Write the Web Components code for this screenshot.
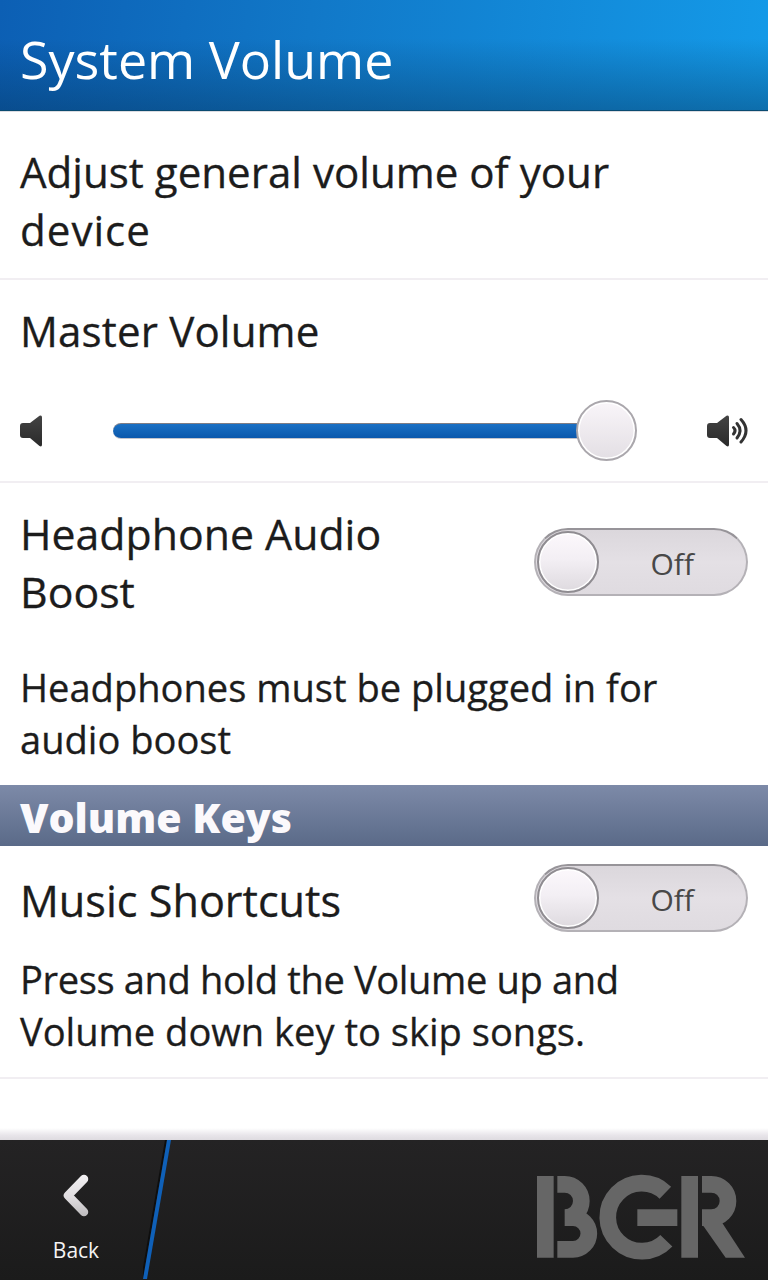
<!DOCTYPE html>
<html>
<head>
<meta charset="utf-8">
<title>System Volume</title>
<style>
  html, body { margin: 0; height: 100%; background: #fff; }
  body { font-family: "Open Sans", sans-serif; color: #1c1c1c; }
  settings-page { height: 1280px; }
</style>
</head>
<body>
<settings-page>
  <title-bar>System Volume</title-bar>
  <setting-block pad="32px 20px 19px">
    <body-text>Adjust general volume of your<br><span style="letter-spacing:1px">device</span></body-text>
  </setting-block>
  <setting-block pad="22px 20px 19px">
    <body-text style="letter-spacing:.15px">Master Volume</body-text>
    <volume-slider level="100" style="margin-top:40px"></volume-slider>
  </setting-block>
  <setting-block pad="22px 20px 20px" plain>
    <toggle-row>Headphone Audio<br>Boost</toggle-row>
    <note-text style="margin-top:40px">Headphones must be plugged in for<br>audio boost</note-text>
  </setting-block>
  <section-bar>Volume Keys</section-bar>
  <setting-block pad="18px 20px 20px">
    <toggle-row drop="4" style="--label-size:43.2px">Music Shortcuts</toggle-row>
    <note-text style="margin-top:19px"><span style="letter-spacing:-.37px">Press and hold the Volume up and</span><br>Volume down key to skip songs.</note-text>
  </setting-block>
  <bottom-bar></bottom-bar>
</settings-page>

<script>
class SettingsPage extends HTMLElement {
  connectedCallback() {
    this.attachShadow({ mode: 'open' });
    this.shadowRoot.innerHTML = `
      <style>
        :host { display: flex; flex-direction: column; background: #fff; }
      </style>
      <slot></slot>
    `;
  }
}

class TitleBar extends HTMLElement {
  connectedCallback() {
    this.attachShadow({ mode: 'open' });
    this.shadowRoot.innerHTML = `
      <style>
        :host {
          display: block;
          height: 111px;
          box-sizing: border-box;
          padding: 25px 20px 0;
          color: #fff;
          font-size: 52px;
          line-height: 68px;
          background:
            linear-gradient(180deg, rgba(4,40,90,0) 35%, rgba(4,50,90,.42) 100%),
            linear-gradient(97deg, #0c5fb4 0%, #1178c8 40%, #149ae8 100%);
          border-bottom: 1px solid #0a4a70;
          box-shadow: 0 1px 0 #dcdce2;
        }
      </style>
      <slot></slot>
    `;
  }
}

class SettingBlock extends HTMLElement {
  connectedCallback() {
    this.attachShadow({ mode: 'open' });
    const pad = this.getAttribute('pad') || '20px';
    const rule = this.hasAttribute('plain') ? 'none' : '2px solid #f1eef2';
    this.shadowRoot.innerHTML = `
      <style>
        :host { display: block; padding: ${pad}; border-bottom: ${rule}; }
      </style>
      <slot></slot>
    `;
  }
}

class BodyText extends HTMLElement {
  connectedCallback() {
    this.attachShadow({ mode: 'open' });
    this.shadowRoot.innerHTML = `
      <style>
        :host { display: block; font-size: 42.1px; line-height: 58px; -webkit-text-stroke: .3px; }
      </style>
      <slot></slot>
    `;
  }
}

class NoteText extends HTMLElement {
  connectedCallback() {
    this.attachShadow({ mode: 'open' });
    this.shadowRoot.innerHTML = `
      <style>
        :host { display: block; font-size: 38.1px; line-height: 52px; -webkit-text-stroke: .3px; }
      </style>
      <slot></slot>
    `;
  }
}

class ToggleRow extends HTMLElement {
  connectedCallback() {
    this.attachShadow({ mode: 'open' });
    const drop = this.getAttribute('drop') || 0;
    this.shadowRoot.innerHTML = `
      <style>
        :host { display: flex; justify-content: space-between; align-items: center; }
        .label { padding-top: ${drop}px; font-size: var(--label-size, 42.8px); line-height: 58px; -webkit-text-stroke: .3px; }
        toggle-switch { margin-bottom: 2px; }
      </style>
      <div class="label"><slot></slot></div>
      <toggle-switch></toggle-switch>
    `;
  }
}

class ToggleSwitch extends HTMLElement {
  connectedCallback() {
    this.attachShadow({ mode: 'open' });
    this.shadowRoot.innerHTML = `
      <style>
        :host {
          display: flex;
          align-items: center;
          justify-content: flex-end;
          position: relative;
          box-sizing: border-box;
          width: 214px;
          height: 68px;
          padding: 2px 52px 0 0;
          border-radius: 34px;
          border: 2px solid #b4b1b6;
          border-top-color: #979499;
          background: linear-gradient(#dbd7dc, #e4e0e5 50%, #dfdbe0);
          color: #484848;
          font-size: 30px;
        }
        .knob {
          position: absolute;
          left: 0;
          top: 0;
          box-sizing: border-box;
          width: 62px;
          height: 62px;
          margin: 1px;
          border-radius: 50%;
          border: 2px solid #8f8c91;
          box-shadow: inset 0 0 0 1.5px #fff;
          background: linear-gradient(#fcf8fc, #f3eff4 45%, #dedadf);
        }
      </style>
      <span class="knob"></span>
      <span>Off</span>
    `;
  }
}

class VolumeSlider extends HTMLElement {
  connectedCallback() {
    this.attachShadow({ mode: 'open' });
    this.shadowRoot.innerHTML = `
      <style>
        :host {
          display: flex;
          align-items: center;
          justify-content: space-between;
          height: 62px;
          margin-top: 41px;
        }
        .track {
          position: relative;
          box-sizing: border-box;
          width: 488px;
          height: 16px;
          margin-left: -1px;
          margin-right: 35px;
          border-radius: 8px;
          border-top: 1px solid #7f7d85;
          border-bottom: 1px solid #c4c4cc;
          background: linear-gradient(#1a70c4, #0b58ac);
        }
        .thumb {
          position: absolute;
          right: -36px;
          top: -24px;
          box-sizing: border-box;
          width: 61px;
          height: 61px;
          border-radius: 50%;
          border: 2px solid #aaa7ac;
          box-shadow: inset 0 0 0 1.5px #fff;
          background: linear-gradient(#f9f5f9, #e3dfe4);
        }
        svg { display: block; }
      </style>
      <svg width="23" height="32" viewBox="0 0 23 32">
        <defs><linearGradient id="a" x1="0" y1="0" x2="0" y2="1"><stop offset="0" stop-color="#444"/><stop offset="1" stop-color="#2a2a2a"/></linearGradient></defs>
        <path fill="url(#a)" d="M3 8h7L19.5 .8Q22 -.4 22 2.500V29.500Q22 32.400 19.500 31L10 23H3Q0 23 0 20V11Q0 8 3 8Z"/>
      </svg>
      <div class="track"><span class="thumb"></span></div>
      <svg width="42" height="32" viewBox="-1 0 42 32">
        <defs><linearGradient id="b" x1="0" y1="0" x2="0" y2="1"><stop offset="0" stop-color="#444"/><stop offset="1" stop-color="#2a2a2a"/></linearGradient></defs>
        <path fill="url(#b)" d="M3 8h7L19.500 .8Q22 -.4 22 2.500V29.500Q22 32.400 19.500 31L10 23H3Q0 23 0 20V11Q0 8 3 8Z"/>
        <g fill="none" stroke="#333" stroke-width="3" stroke-linecap="round">
          <path d="M26.500 12.500Q29.500 15.500 26.500 19"/>
          <path d="M30 8.500Q36 15.500 30 23"/>
          <path d="M34 4.500Q44 15.500 34 27"/>
        </g>
      </svg>
    `;
  }
}

class SectionBar extends HTMLElement {
  connectedCallback() {
    this.attachShadow({ mode: 'open' });
    this.shadowRoot.innerHTML = `
      <style>
        :host {
          display: block;
          height: 61px;
          box-sizing: border-box;
          padding-left: 20px;
          color: #fbf9fc;
          font-size: 41px;
          font-weight: 800;
          line-height: 65px;
          background: linear-gradient(#7d8aa8, #5a6a88);
        }
      </style>
      <slot></slot>
    `;
  }
}

class BottomBar extends HTMLElement {
  connectedCallback() {
    this.attachShadow({ mode: 'open' });
    this.shadowRoot.innerHTML = `
      <style>
        :host { display: block; margin-top: auto; }
        .fade { height: 12px; background: linear-gradient(#fff, #e8e5ea 60%, #dedbe0); }
        .bar {
          display: flex;
          align-items: stretch;
          height: 140px;
          background: linear-gradient(#242324, #1b1b1b);
          color: #f4f4f4;
          font-size: 21px;
        }
        .back {
          display: flex;
          flex-direction: column;
          align-items: center;
          width: 152px;
          margin-right: -9px;
          padding-top: 32px;
          box-sizing: border-box;
        }
        .back span { margin-top: 14px; line-height: 28px; }
        .logo { margin: 30px 17px 0 auto; }
        svg { display: block; }
      </style>
      <div class="fade"></div>
      <div class="bar">
        <div class="back">
          <svg width="40" height="50" viewBox="0 0 40 50">
            <defs>
              <linearGradient id="c" gradientUnits="userSpaceOnUse" x1="0" y1="3" x2="0" y2="44"><stop offset="0" stop-color="#f2f0f2"/><stop offset=".55" stop-color="#e0dde0"/><stop offset="1" stop-color="#bdbbbd"/></linearGradient>
              <filter id="soft" filterUnits="userSpaceOnUse" x="0" y="0" width="40" height="50"><feGaussianBlur stdDeviation=".6"/></filter>
            </defs>
            <path d="M28 7 L12 23.500 L28 40" fill="none" stroke="url(#c)" stroke-width="8.500" stroke-linecap="round" stroke-linejoin="round" filter="url(#soft)"/>
          </svg>
          <span>Back</span>
        </div>
        <svg width="30" height="140" viewBox="0 0 30 140">
          <path d="M22 0H24L0 139H-2Z" fill="#0e0e0e"/>
          <path d="M24 0H28L4 139H0Z" fill="#0f60b8"/>
        </svg>
        <svg class="logo" width="218" height="94" viewBox="70 150 654 282">
          <g fill="none" stroke="#666" stroke-width="50">
            <path d="M107 168V413"/>
            <path d="M143 193H165A50 50 0 0 1 165 293H190A47.500 47.500 0 0 1 190 388H143"/>
            <path d="M467 218A102 102 0 1 0 470 362"/>
            <path d="M383 293H503"/>
            <path d="M540 168V413"/>
            <path d="M577 193H605A50 50 0 0 1 605 293H577"/>
          </g>
          <path d="M577 300H632L706 413H648L577 312Z" fill="#666"/>
        </svg>
      </div>
    `;
  }
}

customElements.define('settings-page', SettingsPage);
customElements.define('title-bar', TitleBar);
customElements.define('setting-block', SettingBlock);
customElements.define('body-text', BodyText);
customElements.define('note-text', NoteText);
customElements.define('toggle-row', ToggleRow);
customElements.define('toggle-switch', ToggleSwitch);
customElements.define('volume-slider', VolumeSlider);
customElements.define('section-bar', SectionBar);
customElements.define('bottom-bar', BottomBar);
</script>
</body>
</html>
